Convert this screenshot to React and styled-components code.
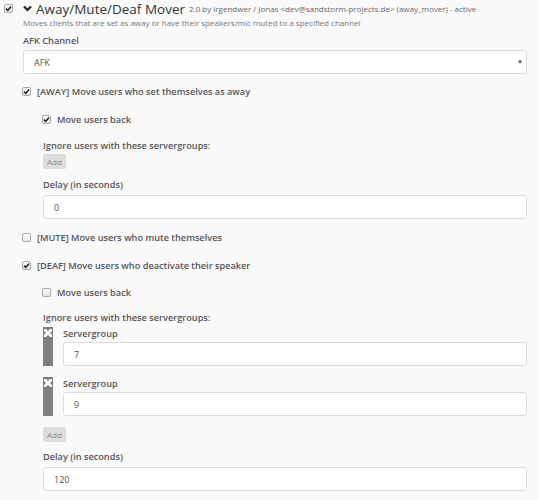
import React from "react";
import styled, { createGlobalStyle } from "styled-components";

const GlobalStyle = createGlobalStyle`
  body {
    margin: 0;
    background: #fafafa;
    font-family: "Open Sans", "Liberation Sans", sans-serif;
    color: #444;
  }
`;

const Plugin = styled.div`
  padding: 0 11px 0 4px;
`;

const Header = styled.div`
  display: flex;
  align-items: center;
  height: 17px;
`;

const Chevron = styled.svg`
  width: 9px;
  height: 7px;
  margin-left: 10px;
  margin-right: 4px;
`;

const Title = styled.span`
  font-size: 13.5px;
  color: #333;
  white-space: nowrap;
`;

const Meta = styled.span`
  font-size: 8px;
  color: #666;
  margin-left: 4px;
  white-space: nowrap;
`;

const Body = styled.div`
  padding-left: 19px;
  display: flex;
  flex-direction: column;
`;

const Description = styled.div`
  font-size: 8px;
  line-height: 12px;
  color: #777;
`;

const Label = styled.div`
  font-size: 9.2px;
  font-weight: 600;
  line-height: 14px;
  color: #555;
  margin-top: ${(p) => p.$mt || 0}px;
  white-space: nowrap;
`;

const Field = styled.div`
  box-sizing: border-box;
  height: 24px;
  margin-top: ${(p) => p.$mt || 0}px;
  background: #fff;
  border: 1px solid #ddd;
  border-radius: 3px;
  display: flex;
  align-items: center;
  justify-content: space-between;
  padding: 0 3px 0 10px;
  font-size: 9px;
  color: #555;
`;

const Arrow = styled.span`
  font-size: 6px;
  color: #444;
`;

const CheckRow = styled.label`
  display: flex;
  align-items: center;
  gap: 6px;
  height: 14px;
  margin-top: ${(p) => p.$mt || 0}px;
  margin-left: ${(p) => p.$ml || 0}px;
  font-size: 9.2px;
  font-weight: 600;
  color: #555;
  white-space: nowrap;
`;

const Box = styled.span`
  box-sizing: border-box;
  width: 9px;
  height: 9px;
  flex: none;
  border: 1px solid #aaa;
  border-radius: 2px;
  background: linear-gradient(#fff, #e6e6e6);
  display: flex;
  align-items: center;
  justify-content: center;
`;

const Nested = styled.div`
  display: flex;
  flex-direction: column;
  padding-left: 20px;
`;

const AddButton = styled.div`
  width: 23px;
  height: 15px;
  margin-top: ${(p) => p.$mt || 0}px;
  background: #ddd;
  border-radius: 2px;
  font-size: 8px;
  line-height: 15px;
  text-align: center;
  color: #888;
`;

const Group = styled.div`
  display: flex;
  height: 39px;
  margin-top: ${(p) => p.$mt || 0}px;
`;

const RemoveBar = styled.div`
  width: 10px;
  flex: none;
  background: #808080;
  display: flex;
  justify-content: center;
  padding-top: 2px;
  box-sizing: border-box;
`;

const GroupBody = styled.div`
  flex: 1;
  padding-left: 10px;
  display: flex;
  flex-direction: column;
`;

const GroupLabel = styled.div`
  font-size: 9.2px;
  font-weight: 600;
  line-height: 13px;
  color: #555;
`;

const Checkbox = ({ checked }) => (
  <Box>
    {checked && (
      <svg width="7" height="7" viewBox="0 0 7 7">
        <path d="M1 3.6 L2.8 5.4 L6 1.4" fill="none" stroke="#222" strokeWidth="1.6" />
      </svg>
    )}
  </Box>
);

const Check = ({ checked, children, mt, ml }) => (
  <CheckRow $mt={mt} $ml={ml}>
    <Checkbox checked={checked} />
    {children}
  </CheckRow>
);

const ServerGroup = ({ value, mt }) => (
  <Group $mt={mt}>
    <RemoveBar>
      <svg width="8" height="8" viewBox="0 0 8 8">
        <path d="M1.2 1.2 L6.8 6.8 M6.8 1.2 L1.2 6.8" stroke="#fff" strokeWidth="2.8" strokeLinecap="square" />
      </svg>
    </RemoveBar>
    <GroupBody>
      <GroupLabel>Servergroup</GroupLabel>
      <Field $mt={2}>{value}</Field>
    </GroupBody>
  </Group>
);

export default function App() {
  return (
    <>
      <GlobalStyle />
      <Plugin>
        <Header>
          <Checkbox checked />
          <Chevron viewBox="0 0 9 7">
            <path d="M1 1.5 L4.5 5 L8 1.5" fill="none" stroke="#222" strokeWidth="2.2" />
          </Chevron>
          <Title>Away/Mute/Deaf Mover</Title>
          <Meta>2.0 by irgendwer / Jonas &lt;dev@sandstorm-projects.de&gt; (away_mover) - active</Meta>
        </Header>
        <Body>
          <Description>
            Moves clients that are set as away or have their speakers/mic muted to a specified channel
          </Description>
          <Label $mt={5}>AFK Channel</Label>
          <Field $mt={2}>
            AFK
            <Arrow>▼</Arrow>
          </Field>

          <Check checked mt={10} ml={-1}>
            [AWAY] Move users who set themselves as away
          </Check>
          <Nested>
            <Check checked mt={14} ml={-1}>
              Move users back
            </Check>
            <Label $mt={13}>Ignore users with these servergroups:</Label>
            <AddButton $mt={1}>Add</AddButton>
            <Label $mt={9}>Delay (in seconds)</Label>
            <Field $mt={3}>0</Field>
          </Nested>

          <Check mt={11} ml={-1}>
            [MUTE] Move users who mute themselves
          </Check>
          <Check checked mt={14} ml={-1}>
            [DEAF] Move users who deactivate their speaker
          </Check>
          <Nested>
            <Check mt={13} ml={-1}>
              Move users back
            </Check>
            <Label $mt={12}>Ignore users with these servergroups:</Label>
            <ServerGroup value="7" mt={2} />
            <ServerGroup value="9" mt={11} />
            <AddButton $mt={11}>Add</AddButton>
            <Label $mt={8}>Delay (in seconds)</Label>
            <Field $mt={3}>120</Field>
          </Nested>
        </Body>
      </Plugin>
    </>
  );
}
